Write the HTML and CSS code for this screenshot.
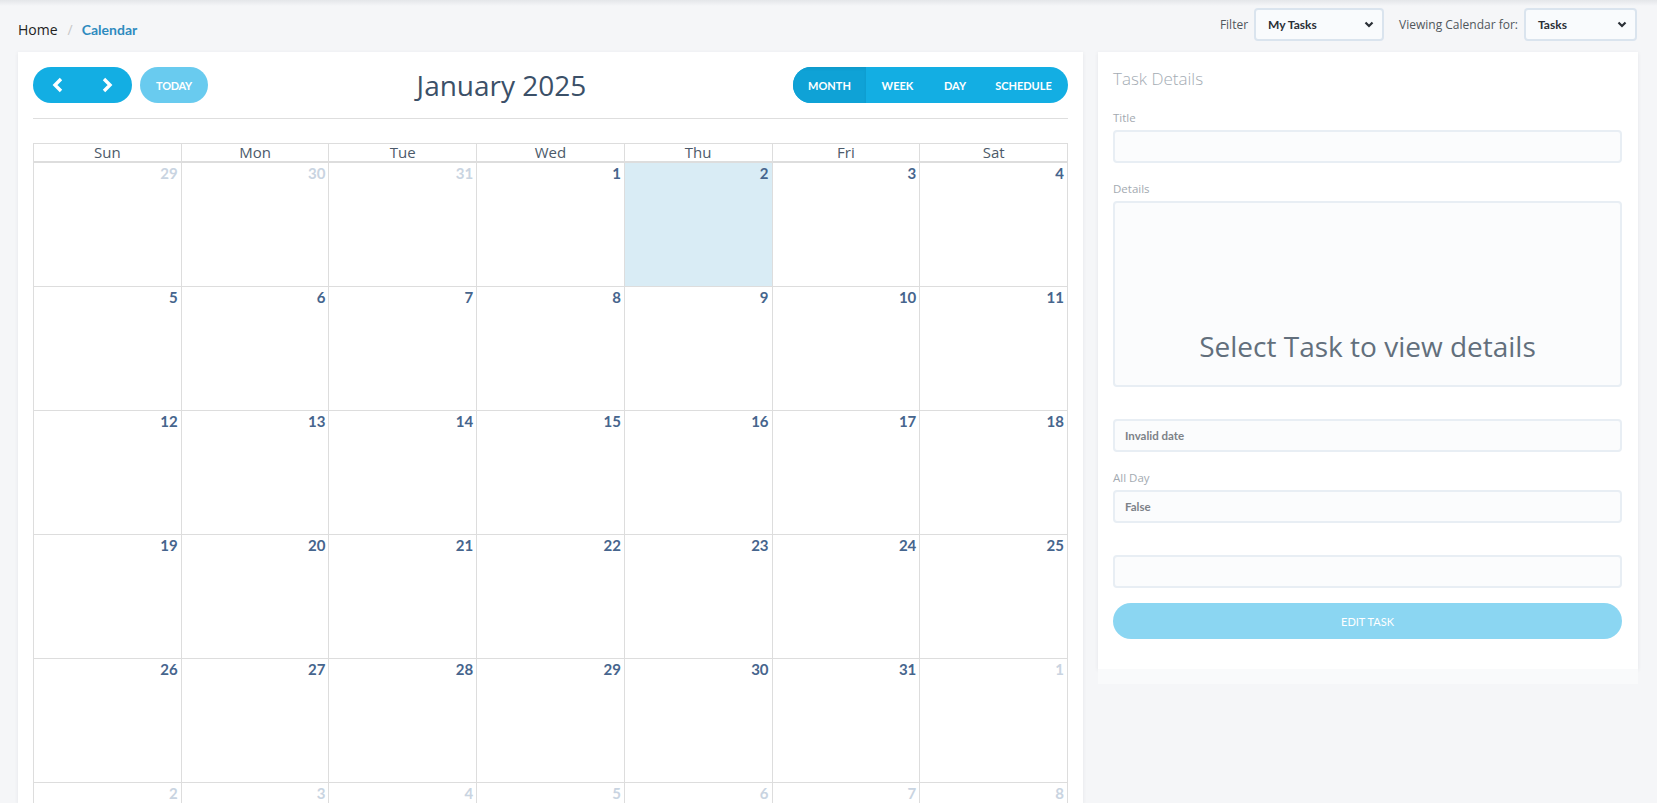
FILE: index.html
```html
<!DOCTYPE html>
<html lang="en">
<head>
    <meta charset="UTF-8">
    <meta name="viewport" content="width=device-width, initial-scale=1.0">
    <title>Calendar</title>
    <link rel="stylesheet" href="styles.css">
</head>
<body>
<header class="topbar">
    <nav class="crumbs">
        <a href="#" class="crumb">Home</a>
        <span class="sep">/</span>
        <span class="crumb current">Calendar</span>
    </nav>
    <div class="filters">
        <span class="filter-label">Filter</span>
        <div class="select select-filter">
            <span>My Tasks</span>
            <svg width="10" height="7" viewBox="0 0 10 7"><polyline points="1.5,1.5 5,5 8.5,1.5" fill="none" stroke="#2a2f36" stroke-width="2.2"/></svg>
        </div>
        <span class="filter-label">Viewing Calendar for:</span>
        <div class="select select-view">
            <span>Tasks</span>
            <svg width="10" height="7" viewBox="0 0 10 7"><polyline points="1.5,1.5 5,5 8.5,1.5" fill="none" stroke="#2a2f36" stroke-width="2.2"/></svg>
        </div>
    </div>
</header>

<main class="layout">
    <section class="card calendar">
        <div class="toolbar">
            <div class="toolbar-left">
                <div class="pill nav">
                    <button class="nav-btn">
                        <svg width="12" height="16" viewBox="0 0 12 16"><polyline points="9,2 3,8 9,14" fill="none" stroke="#fff" stroke-width="3.4"/></svg>
                    </button>
                    <button class="nav-btn">
                        <svg width="12" height="16" viewBox="0 0 12 16"><polyline points="3,2 9,8 3,14" fill="none" stroke="#fff" stroke-width="3.4"/></svg>
                    </button>
                </div>
                <button class="pill today">TODAY</button>
            </div>
            <h2 class="month-title">January 2025</h2>
            <div class="pill views">
                <button class="view active">MONTH</button>
                <button class="view">WEEK</button>
                <button class="view">DAY</button>
                <button class="view">SCHEDULE</button>
            </div>
        </div>
        <div class="divider"></div>

        <div class="month">
            <div class="dow-row">
                <div class="dow">Sun</div>
                <div class="dow">Mon</div>
                <div class="dow">Tue</div>
                <div class="dow">Wed</div>
                <div class="dow">Thu</div>
                <div class="dow">Fri</div>
                <div class="dow">Sat</div>
            </div>
            <div class="week">
                <div class="day other">29</div>
                <div class="day other">30</div>
                <div class="day other">31</div>
                <div class="day">1</div>
                <div class="day today-cell">2</div>
                <div class="day">3</div>
                <div class="day">4</div>
            </div>
            <div class="week">
                <div class="day">5</div>
                <div class="day">6</div>
                <div class="day">7</div>
                <div class="day">8</div>
                <div class="day">9</div>
                <div class="day">10</div>
                <div class="day">11</div>
            </div>
            <div class="week">
                <div class="day">12</div>
                <div class="day">13</div>
                <div class="day">14</div>
                <div class="day">15</div>
                <div class="day">16</div>
                <div class="day">17</div>
                <div class="day">18</div>
            </div>
            <div class="week">
                <div class="day">19</div>
                <div class="day">20</div>
                <div class="day">21</div>
                <div class="day">22</div>
                <div class="day">23</div>
                <div class="day">24</div>
                <div class="day">25</div>
            </div>
            <div class="week">
                <div class="day">26</div>
                <div class="day">27</div>
                <div class="day">28</div>
                <div class="day">29</div>
                <div class="day">30</div>
                <div class="day">31</div>
                <div class="day other">1</div>
            </div>
            <div class="week">
                <div class="day other">2</div>
                <div class="day other">3</div>
                <div class="day other">4</div>
                <div class="day other">5</div>
                <div class="day other">6</div>
                <div class="day other">7</div>
                <div class="day other">8</div>
            </div>
        </div>
    </section>

    <aside class="side">
        <div class="card details">
            <h3 class="details-title">Task Details</h3>

            <div class="field">
                <label class="field-label">Title</label>
                <div class="input"></div>
            </div>

            <div class="field">
                <label class="field-label">Details</label>
                <div class="input textarea">
                    <span class="placeholder">Select Task to view details</span>
                </div>
            </div>

            <div class="field no-label">
                <div class="input">Invalid date</div>
            </div>

            <div class="field">
                <label class="field-label">All Day</label>
                <div class="input">False</div>
            </div>

            <div class="field no-label">
                <div class="input"></div>
            </div>

            <button class="edit-btn">EDIT TASK</button>
        </div>
        <div class="side-strip"></div>
    </aside>
</main>
</body>
</html>
```

FILE: styles.css
```css
* {
    box-sizing: border-box;
}

body {
    margin: 0;
    height: 803px;
    overflow: hidden;
    background: linear-gradient(#e4e6e9, #f5f6f8 6px) #f5f6f8;
    font-family: "Open Sans", "Liberation Sans", sans-serif;
    color: #333;
}

button {
    font-family: Lato, "Liberation Sans", sans-serif;
    border: none;
    cursor: pointer;
    color: #fff;
}

/* top bar */
.topbar {
    display: flex;
    justify-content: space-between;
    align-items: flex-start;
    height: 52px;
    padding: 8px 20px 0 18px;
}

.crumbs {
    display: flex;
    align-items: center;
    margin-top: 12px;
    font-size: 14px;
    line-height: 20px;
}

.crumb {
    color: #222;
    text-decoration: none;
}

.sep {
    color: #c8c8c8;
    margin: 0 9px 0 10px;
}

.current {
    color: #2e8bbf;
    font-family: Lato, "Liberation Sans", sans-serif;
    font-weight: bold;
}

.filters {
    display: flex;
    align-items: center;
}

.filter-label {
    font-size: 12px;
    color: #50565c;
    margin-right: 6px;
}

.select {
    display: flex;
    justify-content: space-between;
    align-items: center;
    height: 33px;
    padding: 0 8px 0 12px;
    background: #f9fbfd;
    border: 2px solid #dae4ee;
    border-radius: 4px;
    font-family: Lato, "Liberation Sans", sans-serif;
    font-weight: bold;
    font-size: 12px;
    color: #2a2f36;
}

.select-filter {
    width: 130px;
    margin-right: 15px;
}

.select-view {
    width: 113px;
}

/* layout */
.layout {
    display: flex;
    align-items: flex-start;
    gap: 15px;
    padding: 0 19px 0 18px;
}

.card {
    background: #fff;
    box-shadow: 0 1px 4px rgba(40, 50, 60, 0.08);
}

.calendar {
    width: 1065px;
    height: 751px;
    padding: 15px 15px 0;
    overflow: hidden;
}

.toolbar {
    display: flex;
    justify-content: space-between;
    align-items: center;
    height: 36px;
}

.toolbar-left {
    display: flex;
    gap: 8px;
}

.pill {
    height: 36px;
    border-radius: 18px;
    background: #13aee3;
    overflow: hidden;
}

.nav {
    display: flex;
    width: 99px;
}

.nav-btn {
    flex: 1;
    background: none;
    display: flex;
    align-items: center;
    justify-content: center;
    padding: 0;
}

.today {
    width: 68px;
    background: #69cbef;
    font-weight: bold;
    font-size: 11px;
    letter-spacing: -0.3px;
}

.month-title {
    margin: 0;
    font-weight: normal;
    font-size: 28px;
    color: #3b5068;
    position: relative;
    left: 1px;
}

.views {
    display: flex;
    width: 275px;
}

.view {
    background: none;
    font-weight: bold;
    font-size: 11px;
    height: 36px;
    flex: 1;
    padding: 0;
}

.view.active {
    flex: 0 0 73px;
    background: #0fa2d6;
    box-shadow: inset 0 2px 3px rgba(0, 0, 0, 0.06);
}

.view:nth-child(2) {
    flex: 0 0 63px;
}

.view:nth-child(3) {
    flex: 0 0 52px;
}

.view:last-child {
    padding-right: 2px;
}

.divider {
    height: 1px;
    background: #dedede;
    margin: 15px 0 24px;
}

/* month grid */
.month {
    border-right: 1px solid #ddd;
}

.dow-row,
.week {
    display: grid;
    grid-template-columns: repeat(7, 1fr);
}

.dow-row {
    border-top: 1px solid #ddd;
    border-bottom: 1px solid #ddd;
}

.dow {
    border-left: 1px solid #ddd;
    text-align: center;
    font-size: 15px;
    line-height: 17px;
    height: 17px;
    color: #4c5a6a;
}

.week {
    height: 124px;
}

.day {
    border-left: 1px solid #ddd;
    border-top: 1px solid #ddd;
    text-align: right;
    padding: 0 3px 0 0;
    font-family: Lato, "Liberation Sans", sans-serif;
    font-weight: bold;
    font-size: 15px;
    line-height: 20px;
    color: #46658d;
}

.day.other {
    color: #c9d4e1;
}

.today-cell {
    background: #d9ecf5;
}

/* details panel */
.side {
    width: 540px;
}

.details {
    padding: 15px 16px 30px 15px;
}

.details-title {
    margin: 0 0 19px;
    font-weight: 300;
    font-size: 17px;
    line-height: 24px;
    color: #a4acb4;
}

.field {
    margin-bottom: 18px;
}

.field.no-label {
    padding-top: 14px;
}

.field-label {
    display: block;
    font-size: 11.5px;
    line-height: 16px;
    margin-bottom: 4px;
    color: #a3aab1;
}

.input {
    height: 33px;
    padding: 0 10px;
    background: #fbfcfd;
    border: 2px solid #e8eef4;
    border-radius: 4px;
    font-family: Lato, "Liberation Sans", sans-serif;
    font-weight: bold;
    font-size: 11.5px;
    line-height: 29px;
    color: #7d8288;
}

.textarea {
    height: 186px;
    display: flex;
    justify-content: center;
    align-items: flex-end;
    padding-bottom: 20px;
}

.placeholder {
    font-family: "Open Sans", "Liberation Sans", sans-serif;
    font-weight: normal;
    font-size: 28px;
    line-height: 38px;
    color: #626f7c;
}

.edit-btn {
    display: block;
    width: 100%;
    height: 36px;
    margin-top: -3px;
    border-radius: 18px;
    background: #8bd6f2;
    font-size: 11px;
}

.side-strip {
    height: 15px;
    background: #f9fafb;
}
```
